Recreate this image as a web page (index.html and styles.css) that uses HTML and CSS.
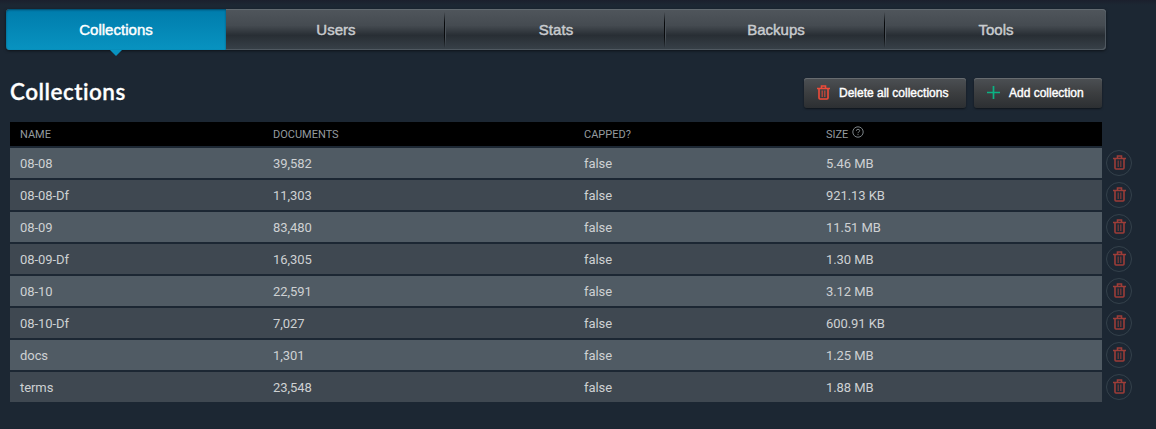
FILE: index.html
```html
<!DOCTYPE html>
<html lang="en">
<head>
<meta charset="utf-8">
<title>Collections</title>
<link rel="stylesheet" href="styles.css">
</head>
<body>
<svg class="sprite" width="0" height="0">
  <symbol id="trash" viewBox="0 0 13 15">
    <path d="M0 3.5H13M4.5 3V1H8.5V3M2 4V13Q2 14 3 14H10Q11 14 11 13V4" fill="none" stroke="currentColor" stroke-width="1.6"/>
    <path d="M5.2 5.5V12M7.8 5.5V12" fill="none" stroke="currentColor" stroke-width="1.3" opacity=".75"/>
  </symbol>
</svg>
<nav class="tabs">
  <a class="tab active">Collections</a>
  <a class="tab first">Users</a>
  <a class="tab">Stats</a>
  <a class="tab">Backups</a>
  <a class="tab">Tools</a>
</nav>
<header class="heading">
  <h1>Collections</h1>
  <button class="btn delete"><svg class="trash"><use href="#trash"/></svg><span>Delete all collections</span></button>
  <button class="btn add"><svg class="plus" viewBox="0 0 13 13"><path d="M6.5 0V13M0 6.5H13" stroke="currentColor" stroke-width="1.7"/></svg><span>Add collection</span></button>
</header>
<main class="list">
  <div class="row head"><span>NAME</span><span>DOCUMENTS</span><span>CAPPED?</span><span class="size">SIZE <svg class="help" viewBox="0 0 12 12"><circle cx="6" cy="6" r="5.2" fill="none" stroke="currentColor"/><path d="M4.3 4.8Q4.4 3.3 6 3.3T7.7 4.7Q7.7 5.5 6.8 5.9Q6 6.3 6 7.2M6 8.1V9.1" fill="none" stroke="currentColor"/></svg></span></div>
  <div class="line"><div class="row odd"><span>08-08</span><span>39,582</span><span>false</span><span>5.46 MB</span></div><a class="remove"><svg class="trash"><use href="#trash"/></svg></a></div>
  <div class="line"><div class="row"><span>08-08-Df</span><span>11,303</span><span>false</span><span>921.13 KB</span></div><a class="remove"><svg class="trash"><use href="#trash"/></svg></a></div>
  <div class="line"><div class="row odd"><span>08-09</span><span>83,480</span><span>false</span><span>11.51 MB</span></div><a class="remove"><svg class="trash"><use href="#trash"/></svg></a></div>
  <div class="line"><div class="row"><span>08-09-Df</span><span>16,305</span><span>false</span><span>1.30 MB</span></div><a class="remove"><svg class="trash"><use href="#trash"/></svg></a></div>
  <div class="line"><div class="row odd"><span>08-10</span><span>22,591</span><span>false</span><span>3.12 MB</span></div><a class="remove"><svg class="trash"><use href="#trash"/></svg></a></div>
  <div class="line"><div class="row"><span>08-10-Df</span><span>7,027</span><span>false</span><span>600.91 KB</span></div><a class="remove"><svg class="trash"><use href="#trash"/></svg></a></div>
  <div class="line"><div class="row odd"><span>docs</span><span>1,301</span><span>false</span><span>1.25 MB</span></div><a class="remove"><svg class="trash"><use href="#trash"/></svg></a></div>
  <div class="line"><div class="row"><span>terms</span><span>23,548</span><span>false</span><span>1.88 MB</span></div><a class="remove"><svg class="trash"><use href="#trash"/></svg></a></div>
</main>
</body>
</html>
```

FILE: styles.css
```css
* { box-sizing: border-box; }
body {
  margin: 0;
  height: 429px;
  padding-top: 9px;
  overflow: hidden;
  background: linear-gradient(#1b202d 0, #1c2733 5px, #1c2733 428px, #192330 429px);
  font-family: Roboto, sans-serif;
}
.sprite { position: absolute; }
.tabs {
  display: flex;
  width: 1100px;
  height: 41px;
  margin-left: 6px;
  border-radius: 4px;
  background: linear-gradient(#50565c 0, #454b51 40%, #282e34 64%, #384149 100%);
  box-shadow: 0 1px 3px rgba(0, 0, 0, .55), inset 0 1px #626a70, inset -1px -1px #505961;
}
.tab {
  position: relative;
  flex: 1;
  text-align: center;
  font: 15px/42px "Liberation Sans", Arial, sans-serif;
  letter-spacing: .03px;
  color: #c9cccf;
  -webkit-text-stroke: .45px;
}
.tab:not(.active):not(.first)::before {
  content: "";
  position: absolute;
  left: -2px;
  top: 3px;
  width: 2px;
  height: 36px;
  background: linear-gradient(90deg, #080a0c 50%, #4b5259 50%);
  mask: linear-gradient(transparent, #000 30%, #000 70%, transparent);
}
.active {
  border-radius: 4px 0 0 4px;
  background: linear-gradient(#007cac, #0893c0);
  box-shadow: inset 0 1px 2px rgba(0, 30, 50, .55);
  color: #fff;
}
.active::after {
  content: "";
  position: absolute;
  left: 104px;
  top: 41px;
  border: 6px solid transparent;
  border-top-color: #0893c0;
  border-bottom: 0;
}
.heading {
  display: flex;
  align-items: flex-start;
  gap: 8px;
  width: 1092px;
  margin: 28px 0 0 10px;
}
h1 {
  flex: 1;
  margin: 0;
  font: 600 22.5px/27px Lato, sans-serif;
  letter-spacing: .5px;
  color: #fff;
  -webkit-text-stroke: .3px;
}
.btn {
  display: flex;
  align-items: center;
  height: 30px;
  padding: 0 0 0 13px;
  border: 0;
  border-radius: 3px;
  background: linear-gradient(#4c5054, #3c3e40 50%, #2c2f32);
  box-shadow: 0 1px 2px rgba(0, 0, 0, .5), inset 0 1px #676c70;
  font: 12px/30px "Liberation Sans", Arial, sans-serif;
  color: #fff;
  white-space: nowrap;
  -webkit-text-stroke: .4px;
}
.delete { width: 162px; }
.add { width: 128px; }
.btn span { margin-left: 9px; }
.trash { width: 13px; height: 15px; margin-bottom: 1px; color: #ee4b3a; }
.plus { width: 13px; height: 13px; margin-bottom: 1px; color: #0bb283; }
.list {
  display: flex;
  flex-direction: column;
  gap: 2px;
  margin: 14px 0 0 10px;
}
.row {
  display: grid;
  grid-template-columns: 253px 311px 242px 1fr;
  align-items: center;
  width: 1092px;
  height: 30px;
  padding-left: 10px;
  background: #3f4851;
  font-size: 13px;
  letter-spacing: -.06px;
  color: #ced1d3;
}
.odd { background: #505b64; }
.head {
  height: 24px;
  background: #000;
  font-size: 11px;
  letter-spacing: 0;
  color: #949b9f;
}
.size { display: flex; gap: 4px; }
.help { width: 12px; height: 12px; margin-top: -2px; color: #7c8387; }
.line { display: flex; align-items: center; gap: 4px; height: 30px; }
.remove {
  display: flex;
  align-items: center;
  justify-content: center;
  width: 26px;
  height: 26px;
  border: 1px solid #34414b;
  border-radius: 50%;
}
.remove .trash { color: #9d3d38; }
```
